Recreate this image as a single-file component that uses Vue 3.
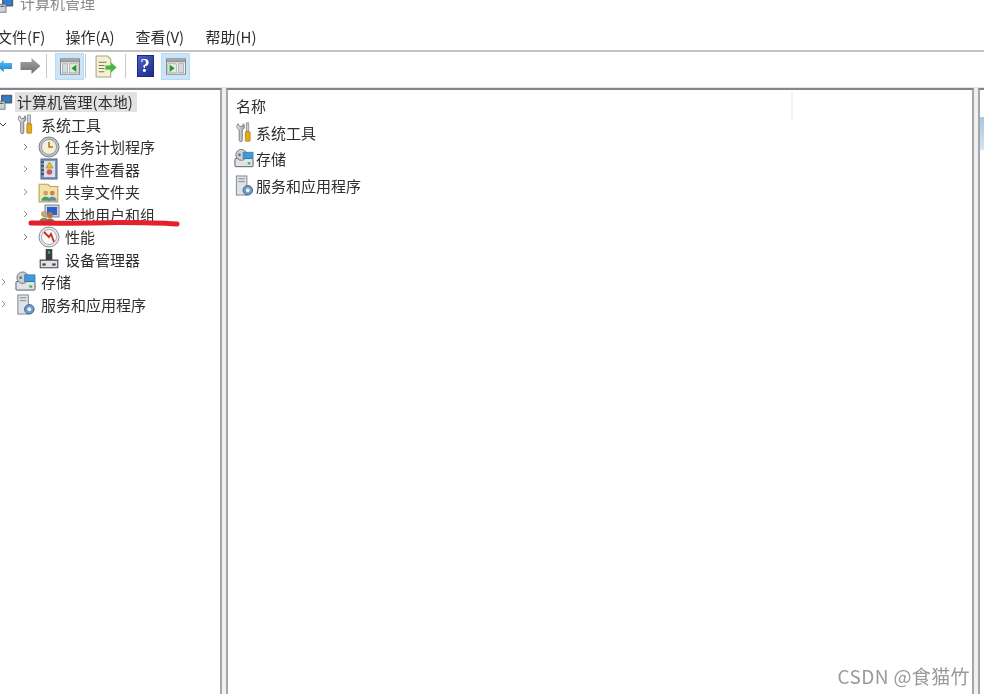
<template>
  <div class="shot">
    <svg class="defs" width="0" height="0">
      <defs>
        <linearGradient id="g-blue" x1="0" y1="0" x2="0" y2="1"><stop offset="0" stop-color="#5cc0f0" /><stop offset="1" stop-color="#1c84cc" /></linearGradient>
        <linearGradient id="g-grey" x1="0" y1="0" x2="0" y2="1"><stop offset="0" stop-color="#a8a8a8" /><stop offset="1" stop-color="#6e6e6e" /></linearGradient>
        <linearGradient id="g-steel" x1="0" y1="0" x2="1" y2="0"><stop offset="0" stop-color="#eef0f2" /><stop offset="1" stop-color="#9aa0a6" /></linearGradient>
      </defs>
      <symbol id="i-computer" viewBox="0 0 20 20">
        <rect x="5" y="1" width="14" height="11" rx="1" fill="#53606e" />
        <rect x="7" y="3" width="10" height="7" fill="#2f7fd6" />
        <rect x="1" y="9" width="9" height="10" fill="#cfd3d8" stroke="#5f656c" />
        <rect x="3" y="11" width="5" height="1.5" fill="#5f656c" />
      </symbol>
      <symbol id="i-tools" viewBox="0 0 20 24">
        <path d="M3 2 C1 5 2 8 4.500 9 L4.500 21 C4.500 23 8 23 8 21 L8 9 C10.500 8 11 5 9.500 2 L8 5 L5 5 Z" fill="url(#g-steel)" stroke="#6c7278" />
        <rect x="12.500" y="1" width="3" height="10" fill="#c9ccd0" stroke="#70757a" stroke-width=".7" />
        <rect x="11.500" y="11" width="5.500" height="11" rx="1" fill="#e9aa12" stroke="#8f6a10" stroke-width=".7" />
      </symbol>
      <symbol id="i-clock" viewBox="0 0 22 22">
        <circle cx="11" cy="11" r="10" fill="#bcc1c6" stroke="#7b8288" />
        <circle cx="11" cy="11" r="7.500" fill="#f5efd8" stroke="#9a9fa5" />
        <path d="M11 6 V11 H15" fill="none" stroke="#a9791d" stroke-width="1.600" />
      </symbol>
      <symbol id="i-event" viewBox="0 0 20 22">
        <rect x="2" y="1" width="16" height="20" fill="#7d95bb" stroke="#4f6285" />
        <rect x="5" y="3" width="11" height="16" fill="#dde2ea" />
        <path d="M2 4 H5 M2 8 H5 M2 12 H5 M2 16 H5" stroke="#3a4558" stroke-width="1.500" />
        <path d="M10.500 4 L14 10 H7 Z" fill="#e8c030" stroke="#9c7a10" stroke-width=".6" />
        <circle cx="10.500" cy="14" r="2.800" fill="#c85a5a" />
      </symbol>
      <symbol id="i-share" viewBox="0 0 20 20">
        <path d="M1 3 H9 L11 5 H18 V19 H1 Z" fill="#f5e3a4" stroke="#b9a25c" />
        <circle cx="7" cy="11" r="2.200" fill="#c9a070" />
        <path d="M3 18 C3 13 11 13 11 18 Z" fill="#3c9a8c" />
        <circle cx="13" cy="11" r="2.200" fill="#b9895e" />
        <path d="M9 18 C9 13 17 13 17 18 Z" fill="#4f8fba" />
      </symbol>
      <symbol id="i-users" viewBox="0 0 22 20">
        <rect x="7" y="1" width="14" height="12" fill="#cfd5dc" stroke="#7a828b" />
        <rect x="9" y="3" width="10" height="8" fill="#2a62c8" />
        <circle cx="6" cy="10" r="3" fill="#caa070" />
        <path d="M1 19 C1 12 11 12 11 19 Z" fill="#6f9448" />
        <circle cx="12" cy="11" r="3" fill="#a9794c" />
        <path d="M7 19 C7 13 17 13 17 19 Z" fill="#7d6a48" />
      </symbol>
      <symbol id="i-perf" viewBox="0 0 22 22">
        <circle cx="11" cy="11" r="10" fill="#e6e8ea" stroke="#8a9096" />
        <circle cx="11" cy="11" r="7.500" fill="#fbfbf6" stroke="#a9adb2" />
        <path d="M6 6 L11 11 L13 8 L16 16" fill="none" stroke="#d02828" stroke-width="1.800" />
      </symbol>
      <symbol id="i-device" viewBox="0 0 18 20">
        <rect x="6" y="1" width="6" height="10" fill="#3a3e42" />
        <rect x="8" y="3" width="2" height="2" fill="#3fc060" />
        <path d="M1 11 H17 V18 H1 Z" fill="#e1e3e5" stroke="#43474b" />
        <rect x="3" y="14" width="3" height="2" fill="#43474b" />
        <rect x="12" y="14" width="3" height="2" fill="#43474b" />
      </symbol>
      <symbol id="i-storage" viewBox="0 0 22 20">
        <rect x="1" y="10" width="20" height="9" rx="1" fill="#dfe3e6" stroke="#4f575e" />
        <rect x="15" y="14" width="3" height="2.500" fill="#4fb060" />
        <circle cx="8" cy="6" r="6" fill="#c9ced3" stroke="#6e757c" />
        <circle cx="6" cy="6" r="1.500" fill="#6e757c" />
        <rect x="10" y="3" width="11" height="7" fill="#3f9bd8" stroke="#2a6f9e" stroke-width=".6" />
      </symbol>
      <symbol id="i-service" viewBox="0 0 20 22">
        <rect x="2" y="1" width="11" height="20" fill="#dfe3e8" stroke="#7d858d" />
        <path d="M4 4 H11 M4 7 H11" stroke="#7d858d" />
        <circle cx="14" cy="16" r="5" fill="#6f9bc8" stroke="#3f648e" />
        <circle cx="14" cy="16" r="2" fill="#f0f3f6" />
      </symbol>
      <symbol id="i-pane-left" viewBox="0 0 22 18">
        <rect x=".5" y=".5" width="21" height="17" fill="#f4f5f4" stroke="#7f8285" />
        <rect x="1" y="1" width="20" height="3.500" fill="#9a9c9f" />
        <rect x="2.500" y="6" width="6" height="10" fill="#d5dade" stroke="#8f9498" stroke-width=".6" />
        <rect x="10.500" y="6" width="9.500" height="10" fill="#dfeadd" stroke="#8f9498" stroke-width=".6" />
        <path d="M18 7 L12.500 11 L18 15 Z" fill="#1f9a28" />
      </symbol>
      <symbol id="i-pane-right" viewBox="0 0 22 18">
        <rect x=".5" y=".5" width="21" height="17" fill="#f4f5f4" stroke="#7f8285" />
        <rect x="1" y="1" width="20" height="3.500" fill="#9a9c9f" />
        <rect x="2" y="6" width="9.500" height="10" fill="#dfeadd" stroke="#8f9498" stroke-width=".6" />
        <rect x="13.500" y="6" width="6" height="10" fill="#d5dade" stroke="#8f9498" stroke-width=".6" />
        <path d="M4 7 L9.500 11 L4 15 Z" fill="#1f9a28" />
      </symbol>
      <symbol id="i-export" viewBox="0 0 22 22">
        <path d="M2 1 H13 L16 4 V21 H2 Z" fill="#f7f1cf" stroke="#a9a68e" />
        <path d="M4.500 7 H12 M4.500 10 H10 M4.500 13 H10 M4.500 16 H10" stroke="#77766a" />
        <path d="M11 10 H16 V7 L21.500 12 L16 17 V14 H11 Z" fill="#45b83c" stroke="#8cd884" stroke-width=".5" />
      </symbol>
    </svg>

    <div class="titlebar">
      <svg class="title-icon"><use href="#i-computer" /></svg>
      <span class="title-text">计算机管理</span>
    </div>

    <nav class="menubar">
      <span v-for="m in menus" :key="m">{{ m }}</span>
    </nav>

    <div class="toolbar">
      <svg class="arrow" viewBox="0 0 20 16"><path d="M0 8 L9 0 V4 H20 V12 H9 V16 Z" fill="url(#g-blue)" /></svg>
      <svg class="arrow fwd" viewBox="0 0 20 16"><path d="M20 8 L11 0 V4 H0 V12 H11 V16 Z" fill="url(#g-grey)" /></svg>
      <i class="sep first"></i>
      <button class="tool on"><svg class="pane"><use href="#i-pane-left" /></svg></button>
      <i class="sep"></i>
      <button class="tool wide"><svg class="export"><use href="#i-export" /></svg></button>
      <i class="sep"></i>
      <button class="tool help-btn"><span class="help">?</span></button>
      <button class="tool on"><svg class="pane"><use href="#i-pane-right" /></svg></button>
    </div>

    <div class="panes">
      <aside class="pane-box tree">
        <div class="row root">
          <svg class="root-icon"><use href="#i-computer" /></svg>
          <span class="selected">计算机管理(本地)</span>
        </div>
        <div v-for="r in tree" :key="r.label" class="row" :class="'lv' + r.level">
          <svg class="chev" :class="{ open: r.chev === 'open' }" viewBox="0 0 8 8">
            <path v-if="r.chev === 'open'" d="M1 3 L4 6 L7 3" />
            <path v-else-if="r.chev" d="M3 1 L6 4 L3 7" />
          </svg>
          <svg class="ico"><use :href="'#' + r.icon" /></svg>
          <span class="label">{{ r.label }}</span>
        </div>
      </aside>

      <main class="pane-box list">
        <div class="list-head">
          <span class="col-name">名称</span>
        </div>
        <div v-for="r in items" :key="r.label" class="item">
          <svg class="ico"><use :href="'#' + r.icon" /></svg>
          <span>{{ r.label }}</span>
        </div>
      </main>

      <aside class="pane-box actions">
        <div class="actions-blank"></div>
        <div class="actions-head"></div>
      </aside>
    </div>

    <svg class="scribble" viewBox="0 0 152 10">
      <path d="M3 5 C40 5.500 60 5 90 4.500 C115 4.500 135 5 149 6" fill="none" stroke="#e3202c" stroke-width="5" stroke-linecap="round" />
    </svg>
    <div class="mark">CSDN @食猫竹</div>
  </div>
</template>

<script setup>
const menus = ['文件(F)', '操作(A)', '查看(V)', '帮助(H)']

const tree = [
  { label: '系统工具', level: 1, chev: 'open', icon: 'i-tools' },
  { label: '任务计划程序', level: 2, chev: 'right', icon: 'i-clock' },
  { label: '事件查看器', level: 2, chev: 'right', icon: 'i-event' },
  { label: '共享文件夹', level: 2, chev: 'right', icon: 'i-share' },
  { label: '本地用户和组', level: 2, chev: 'right', icon: 'i-users' },
  { label: '性能', level: 2, chev: 'right', icon: 'i-perf' },
  { label: '设备管理器', level: 2, chev: '', icon: 'i-device' },
  { label: '存储', level: 1, chev: 'right', icon: 'i-storage' },
  { label: '服务和应用程序', level: 1, chev: 'right', icon: 'i-service' },
]

const items = [
  { label: '系统工具', icon: 'i-tools' },
  { label: '存储', icon: 'i-storage' },
  { label: '服务和应用程序', icon: 'i-service' },
]
</script>

<style>
html, body {
  margin: 0;
  background: #fff;
  overflow: hidden;
}
</style>

<style scoped>
.shot {
  position: relative;
  width: 984px;
  height: 694px;
  overflow: hidden;
  background: #fff;
  color: #2e2e2e;
  font-family: "Noto Sans CJK SC", "Liberation Sans", sans-serif;
  font-size: 15px;
  display: flex;
  flex-direction: column;
  filter: blur(0.35px);
}
.defs {
  position: absolute;
}
svg {
  display: block;
  flex: none;
}
.titlebar {
  height: 13px;
  flex: none;
  overflow: hidden;
  display: flex;
  align-items: flex-end;
  margin-left: -2px;
  gap: 6px;
  color: #8a8a8a;
}
.title-icon {
  width: 16px;
  height: 16px;
}
.title-text {
  line-height: 20px;
}
.menubar {
  flex: none;
  height: 39px;
  box-sizing: border-box;
  padding: 13px 0 0 0;
  margin-left: -3px;
  display: flex;
  gap: 20px;
  line-height: 22px;
  border-bottom: 2px solid #c4c4c4;
}
.menubar span {
  min-width: 50px;
  white-space: nowrap;
}
.menubar span:first-child {
  min-width: 48px;
}
.toolbar {
  flex: none;
  height: 28px;
  display: flex;
  align-items: center;
  margin-left: -3px;
  background: #fff;
}
.arrow {
  width: 15px;
  height: 16px;
}
.fwd {
  width: 21px;
  margin-left: 8px;
}
.sep {
  width: 1px;
  height: 24px;
  background: #c8c8c8;
  margin: 0 1px;
}
.sep.first {
  margin: 0 8px 0 5px;
}
.tool {
  height: 27px;
  width: 29px;
  padding: 0;
  border: 1px solid transparent;
  background: none;
  display: flex;
  align-items: center;
  justify-content: center;
}
.tool.on {
  background: #cce4f7;
  border-color: #b8daf5;
}
.tool.wide {
  width: 37px;
}
.help-btn {
  margin-left: 6px;
  margin-right: 4px;
  width: 24px;
}
.pane {
  width: 20px;
  height: 17px;
}
.export {
  width: 23px;
  height: 23px;
}
.help {
  width: 17px;
  height: 22px;
  background: linear-gradient(135deg, #4a60d0, #1c2a86);
  border: 1px solid #1c2a70;
  box-sizing: border-box;
  color: #fff;
  font: bold 19px/20px "Liberation Serif", serif;
  text-align: center;
}
.panes {
  flex: 1;
  min-height: 0;
  margin-top: 7px;
  background: #f0f0f0;
  display: grid;
  grid-template-columns: 223px 748px 1fr;
  column-gap: 4px;
  padding-left: 0;
  margin-left: -1px;
  width: 985px;
  box-sizing: border-box;
  border-top: 1px solid #e4e4e4;
}
.pane-box {
  background: #fff;
  border: 2px solid #a3a6aa;
  border-top-color: #82858f;
  border-bottom: none;
  box-sizing: border-box;
  min-width: 0;
  overflow: hidden;
}
.tree {
  border-left: none;
  padding-top: 0.5px;
}
.row {
  height: 22.5px;
  display: flex;
  align-items: center;
}
.selected {
  background: #e2e2e2;
  padding: 0 4px 0 2px;
  line-height: 20px;
  letter-spacing: 0.1px;
}
.root-icon {
  width: 16px;
  height: 18px;
  margin: 0 2px 0 -2px;
}
.chev {
  width: 8px;
  height: 8px;
  fill: none;
  stroke: #8c8c8c;
  stroke-width: 1;
}
.chev.open {
  stroke: #444;
}
.lv1 {
  padding-left: 0;
}
.lv1 .ico {
  width: 21px;
  height: 21px;
  margin-left: 8px;
}
.lv1 .label {
  margin-left: 5px;
}
.lv2 {
  padding-left: 22px;
}
.lv2 .ico {
  width: 22px;
  height: 22px;
  margin-left: 9px;
}
.lv2 .label {
  margin-left: 5px;
}
.list-head {
  height: 29px;
  display: flex;
  align-items: center;
  padding: 2px 0 0 8px;
  box-sizing: border-box;
}
.col-name {
  width: 555px;
  height: 100%;
  line-height: 28px;
  border-right: 2px solid #f2f2f2;
}
.item {
  height: 26.5px;
  display: flex;
  align-items: center;
  gap: 2px;
  padding-left: 6px;
}
.item .ico {
  width: 20px;
  height: 21px;
}
.actions {
  border-right: none;
}
.actions-blank {
  height: 27px;
}
.actions-head {
  height: 33px;
  background: linear-gradient(#a9c4e2, #d6e4f2);
}
.scribble {
  position: absolute;
  left: 28px;
  top: 218px;
  width: 152px;
  height: 10px;
}
.mark {
  position: absolute;
  right: 14px;
  top: 663px;
  font-size: 19px;
  line-height: 26px;
  color: #9a9a9a;
  letter-spacing: 0.4px;
}
</style>
